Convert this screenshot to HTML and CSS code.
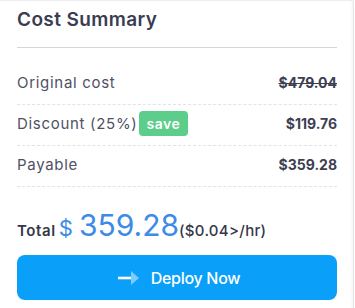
FILE: index.html
```html
<!DOCTYPE html>
<html>
<head>
<meta charset="utf-8">
<link rel="stylesheet" href="styles.css">
</head>
<body>
<div class="card">
  <div class="title">Cost Summary</div>
  <div class="rows">
    <div class="row"><span class="label">Original cost</span><span class="value strike">$479.04</span></div>
    <div class="row"><span class="label">Discount (25%)<span class="badge">save</span></span><span class="value">$119.76</span></div>
    <div class="row"><span class="label">Payable</span><span class="value">$359.28</span></div>
  </div>
  <div class="total">
    <span class="total-label">Total</span>
    <span class="cur">$</span>
    <span class="amount">359.28</span>
    <span class="rate">($0.04&gt;/hr)</span>
  </div>
  <button class="deploy">
    <svg class="arrow" width="22" height="14" viewBox="0 0 22 14"><path d="M13 0 L21 7 L13 14 Z" fill="#7dcbfb"/><path d="M0 7 H13" stroke="#fff" stroke-width="2.6"/></svg>
    <span>Deploy Now</span>
  </button>
</div>
</body>
</html>
```
FILE: styles.css
```css
html, body {
  margin: 0;
  padding: 0;
  background: #fff;
}
body {
  font-family: Inter, "Noto Sans", sans-serif;
  color: #3d3f52;
}
.card {
  width: 354px;
  height: 320px;
  box-sizing: border-box;
  padding: 0 16px 0 17px;
  border-top: 1px solid #eeeef1;
  border-right: 1px solid #e6e6ea;
  box-shadow: inset -4px 0 4px -3px #f2f2f4;
}
.title {
  padding-top: 7px;
  line-height: 24px;
  padding-bottom: 15px;
  font-size: 19px;
  font-weight: 600;
  letter-spacing: 0.4px;
  color: #3a3c50;
  border-bottom: 1px solid #d6d6dc;
}
.rows {
  margin-top: 16px;
}
.row {
  display: flex;
  align-items: center;
  justify-content: space-between;
  height: 40px;
  border-bottom: 1px dashed #e2e2e8;
}
.row > span {
  position: relative;
  top: -2px;
}
.label {
  font-size: 15px;
  letter-spacing: 0.7px;
  color: #4f5163;
  display: flex;
  align-items: center;
}
.value {
  font-size: 14px;
  font-weight: 700;
  color: #3d3f52;
}
.strike {
  text-decoration: line-through;
}
.badge {
  display: inline-block;
  margin-left: 1px;
  background: #5ccd8a;
  color: #fff;
  font-size: 14px;
  font-weight: 600;
  letter-spacing: 0.5px;
  line-height: 25px;
  height: 25px;
  padding: 0 8px;
  border-radius: 4px;
}
.total {
  display: flex;
  align-items: baseline;
  margin-top: 20px;
  height: 36px;
  line-height: 36px;
}
.total-label {
  font-size: 15px;
  font-weight: 600;
  letter-spacing: 0.6px;
  color: #353749;
}
.cur {
  font-size: 22px;
  color: #3c8be6;
  margin-left: 3px;
  margin-right: 6px;
}
.amount {
  font-size: 30px;
  color: #3c8be6;
}
.rate {
  font-size: 15px;
  font-weight: 500;
  letter-spacing: 0.3px;
  color: #353749;
  margin-left: 0;
}
.deploy {
  display: flex;
  align-items: center;
  justify-content: center;
  gap: 11px;
  margin-top: 12px;
  width: 100%;
  height: 45px;
  border: none;
  border-radius: 8px;
  background: #0aa0f9;
  color: #fff;
  font-family: inherit;
  font-size: 16px;
  font-weight: 500;
  letter-spacing: -0.3px;
  padding: 0 0 0 4px;
}
.arrow {
  display: block;
}
```
